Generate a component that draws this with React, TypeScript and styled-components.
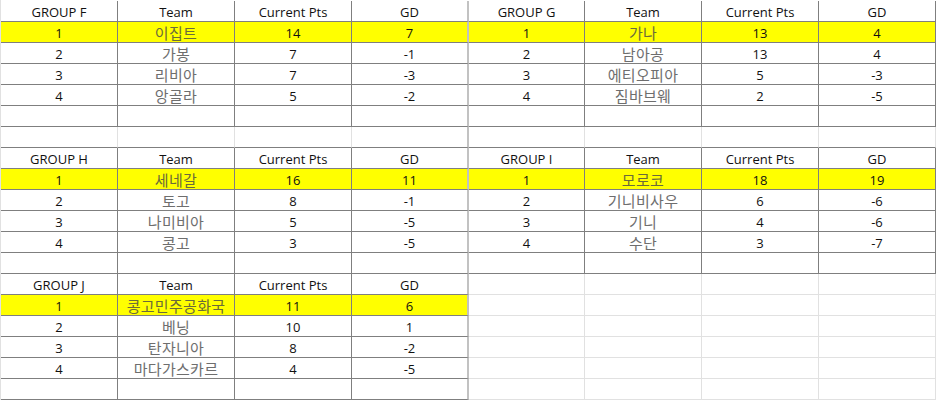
import React from "react";
import styled, { createGlobalStyle, css } from "styled-components";

const GlobalStyle = createGlobalStyle`
  html, body { margin: 0; padding: 0; background: #ffffff; }
  #root { width: 936px; height: 400px; overflow: hidden; }
`;

const DARK = "#7f7f7f";
const LIGHT = "#e1e1e1";
const DIVIDER = "#c2c2c2";

const Sheet = styled.div`
  display: grid;
  grid-template-columns: 117px 117px 117px 117px 116px 117px 117px 117px;
  grid-auto-rows: 21px;
  padding-top: 1px;
  border-left: 1px solid ${LIGHT};
  width: 935px;
  background: #ffffff;
`;

type Kind = "head" | "num" | "team" | "empty";

const Cell = styled.div<{
  $kind: Kind;
  $hl: boolean;
  $darkRight: boolean;
  $darkBottom: boolean;
  $divider: boolean;
}>`
  box-sizing: border-box;
  display: flex;
  align-items: center;
  justify-content: center;
  padding-top: 2px;
  white-space: nowrap;
  overflow: hidden;
  background: ${(p) => (p.$hl ? "#ffff00" : "#ffffff")};
  border-bottom: 1px solid ${(p) => (p.$darkBottom ? DARK : LIGHT)};
  border-right: ${(p) =>
    p.$divider ? `2px solid ${DIVIDER}` : `1px solid ${p.$darkRight ? DARK : LIGHT}`};
  font-family: "Open Sans", "Noto Sans CJK KR", sans-serif;
  font-size: 13px;
  color: #111111;
  ${(p) =>
    p.$kind === "team" &&
    css`
      font-family: "Noto Sans CJK KR", "Noto Sans", sans-serif;
      font-size: 15px;
      padding-top: 1px;
      letter-spacing: 0.3px;
      color: ${p.$hl ? "#6b6b3a" : "#6e6e6e"};
    `}
`;

type Row = [string, string, string, string];

interface Group {
  name: string;
  rows: Row[];
}

const groups: Record<string, Group> = {
  F: {
    name: "GROUP F",
    rows: [
      ["1", "이집트", "14", "7"],
      ["2", "가봉", "7", "-1"],
      ["3", "리비아", "7", "-3"],
      ["4", "앙골라", "5", "-2"],
    ],
  },
  G: {
    name: "GROUP G",
    rows: [
      ["1", "가나", "13", "4"],
      ["2", "남아공", "13", "4"],
      ["3", "에티오피아", "5", "-3"],
      ["4", "짐바브웨", "2", "-5"],
    ],
  },
  H: {
    name: "GROUP H",
    rows: [
      ["1", "세네갈", "16", "11"],
      ["2", "토고", "8", "-1"],
      ["3", "나미비아", "5", "-5"],
      ["4", "콩고", "3", "-5"],
    ],
  },
  I: {
    name: "GROUP I",
    rows: [
      ["1", "모로코", "18", "19"],
      ["2", "기니비사우", "6", "-6"],
      ["3", "기니", "4", "-6"],
      ["4", "수단", "3", "-7"],
    ],
  },
  J: {
    name: "GROUP J",
    rows: [
      ["1", "콩고민주공화국", "11", "6"],
      ["2", "베닝", "10", "1"],
      ["3", "탄자니아", "8", "-2"],
      ["4", "마다가스카르", "4", "-5"],
    ],
  },
};

// placement of each group: top row and left column
const placements: { key: string; row: number; col: number }[] = [
  { key: "F", row: 0, col: 0 },
  { key: "G", row: 0, col: 4 },
  { key: "H", row: 7, col: 0 },
  { key: "I", row: 7, col: 4 },
  { key: "J", row: 13, col: 0 },
];

const ROWS = 19;
const COLS = 8;

interface CellInfo {
  text: string;
  kind: Kind;
  hl: boolean;
  inTable: boolean;
}

function buildGrid(): CellInfo[][] {
  const grid: CellInfo[][] = [];
  for (let r = 0; r < ROWS; r++) {
    const row: CellInfo[] = [];
    for (let c = 0; c < COLS; c++) {
      row.push({ text: "", kind: "empty", hl: false, inTable: false });
    }
    grid.push(row);
  }
  placements.forEach(({ key, row, col }) => {
    const g = groups[key];
    const header = [g.name, "Team", "Current Pts", "GD"];
    header.forEach((t, i) => {
      grid[row][col + i] = { text: t, kind: "head", hl: false, inTable: true };
    });
    g.rows.forEach((data, ri) => {
      data.forEach((t, i) => {
        grid[row + 1 + ri][col + i] = {
          text: t,
          kind: i === 1 ? "team" : "num",
          hl: ri === 0,
          inTable: true,
        };
      });
    });
    for (let i = 0; i < 4; i++) {
      grid[row + 5][col + i] = { text: "", kind: "empty", hl: false, inTable: true };
    }
  });
  return grid;
}

export default function App() {
  const grid = buildGrid();
  return (
    <>
      <GlobalStyle />
      <Sheet>
        {grid.map((row, r) =>
          row.map((cell, c) => {
            const below = r + 1 < ROWS ? grid[r + 1][c].inTable : false;
            return (
              <Cell
                key={`${r}-${c}`}
                $kind={cell.kind}
                $hl={cell.hl}
                $darkRight={cell.inTable}
                $darkBottom={cell.inTable || below}
                $divider={c === 3}
              >
                {cell.text}
              </Cell>
            );
          })
        )}
      </Sheet>
    </>
  );
}
